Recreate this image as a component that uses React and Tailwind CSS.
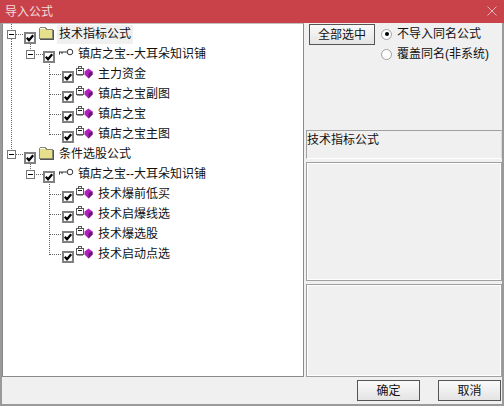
import React from 'react';

const FONT = "font-['Liberation_Sans','Noto_Sans_CJK_SC',sans-serif]";

// Dotted tree connectors + expander box, drawn per row
const Guides = ({ children }) => (
  <svg width="97" height="20" className="absolute left-0 top-0" shapeRendering="crispEdges">
    {children}
  </svg>
);
const VDots = ({ x, y1 = 0, y2 = 20 }) => (
  <line x1={x + 0.5} x2={x + 0.5} y1={y1} y2={y2} stroke="#666" strokeDasharray="1 1" />
);
const HDots = ({ x1, x2, y = 10 }) => (
  <line x1={x1} x2={x2} y1={y + 0.5} y2={y + 0.5} stroke="#666" strokeDasharray="1 1" />
);
const Expander = ({ x, y = 6 }) => (
  <g>
    <rect x={x + 0.5} y={y + 0.5} width="8" height="8" fill="#fff" stroke="#777" />
    <line x1={x + 2} x2={x + 7} y1={y + 4.5} y2={y + 4.5} stroke="#000" />
  </g>
);

const Check = ({ left, top = 7 }) => (
  <svg width="12" height="12" viewBox="0 0 12 12" className="absolute" style={{ left, top }}>
    <rect x="1" y="1" width="10" height="10" fill="#fff" stroke="#808080" strokeWidth="2" />
    <path d="M2.8 5.8 L5 8.3 L9.2 3.2" fill="none" stroke="#000" strokeWidth="2.2" />
  </svg>
);

const Folder = () => (
  <svg width="16" height="14" viewBox="0 0 16 14" className="absolute left-[35px] top-[2px]" shapeRendering="crispEdges">
    <path d="M1.5 3.5 V2.5 H2.5 V1.5 H7.5 V2.5 H8.5 V3.5 H14.5 V12.5 H1.5 Z" fill="#e6e08c" stroke="#8a8a70" />
    <rect x="2" y="2" width="5" height="1" fill="#fff" />
    <rect x="15" y="4" width="1" height="9" fill="#555" />
    <rect x="2" y="13" width="14" height="1" fill="#555" />
  </svg>
);

const KeyIcon = () => (
  <svg width="16" height="8" viewBox="0 0 16 8" className="absolute left-[55px] top-[4px]">
    <circle cx="12" cy="4" r="2.8" fill="#fff" stroke="#333" />
    <path d="M9 4 H1 M1.5 4 V6.5 M4 4 V6" fill="none" stroke="#333" />
  </svg>
);

const FormulaIcon = () => (
  <svg width="17" height="14" viewBox="0 0 17 14" className="absolute left-[73px] top-[1px]" shapeRendering="crispEdges">
    <path d="M2.5 3.5 V1.5 H5.5 V3.5" fill="none" stroke="#555" />
    <rect x="0.5" y="3.5" width="7" height="6" fill="#fff" stroke="#555" />
    <rect x="2" y="5" width="4" height="1" fill="#222" />
    <rect x="1" y="10" width="6" height="1" fill="#999" />
    <path d="M12.5 3.5 L16.5 6.5 V9.5 L12.5 13.5 L8.5 9.5 V6.5 Z" fill="#b020c0" shapeRendering="auto" />
    <path d="M12.5 8 L16.5 6.5 V9.5 L12.5 13.5 Z" fill="#6a1478" shapeRendering="auto" />
  </svg>
);

const GroupRow = ({ label, selected, continues }) => (
  <div className="relative h-5">
    <Guides>
      <VDots x={8} y1={0} y2={6} />
      {continues && <VDots x={8} y1={15} y2={20} />}
      <HDots x1={13} x2={21} />
      <VDots x={27} y1={18} y2={20} />
      <Expander x={4} />
    </Guides>
    <Check left={21} top={8} />
    <Folder />
    <span className={`absolute left-[54px] top-[1px] h-[19px] px-[2px] leading-[18px] text-[12px] text-[#111] ${selected ? 'bg-[#f0f0f0]' : ''}`}>{label}</span>
  </div>
);

const KeyRow = ({ label, outer }) => (
  <div className="relative h-5">
    <Guides>
      {outer && <VDots x={8} />}
      <VDots x={27} y1={0} y2={6} />
      <HDots x1={33} x2={40} />
      <VDots x={46} y1={18} y2={20} />
      <Expander x={23} />
    </Guides>
    <Check left={40} />
    <KeyIcon />
    <span className="absolute left-[75px] top-[1px] leading-[18px] text-[12px] text-[#111]">{label}</span>
  </div>
);

const LeafRow = ({ label, outer, last }) => (
  <div className="relative h-5">
    <Guides>
      {outer && <VDots x={8} />}
      <VDots x={46} y1={0} y2={last ? 11 : 20} />
      <HDots x1={47} x2={59} />
    </Guides>
    <Check left={59} />
    <FormulaIcon />
    <span className="absolute left-[95px] top-[1px] leading-[18px] text-[12px] text-[#111]">{label}</span>
  </div>
);

const Radio = ({ checked, label }) => (
  <div className="flex items-center h-5 gap-[5px]">
    <span className="w-[11px] h-[11px] rounded-full bg-white border border-[#a0a0a0] flex items-center justify-center">
      {checked && <span className="w-[4px] h-[4px] rounded-full bg-black" />}
    </span>
    <span className="text-[12px] text-[#111] leading-[18px]">{label}</span>
  </div>
);

const DlgButton = ({ children, className = '' }) => (
  <button className={`h-[21px] border border-[#555] bg-gradient-to-b from-[#fafafa] to-[#e4e4e4] text-[12px] text-[#111] leading-none ${className}`}>
    {children}
  </button>
);

export default function App() {
  return (
    <div className={`${FONT} w-[504px] h-[406px] flex flex-col bg-[#f0f0f0] overflow-hidden`}>
      <div className="h-[23px] bg-[#c9424a] flex items-center justify-between pl-[5px] pr-[5px] shrink-0">
        <span className="text-[12px] text-[#f3dcdd]">导入公式</span>
        <svg width="10" height="10" viewBox="0 0 10 10" className="mr-[2px] mb-[2px]">
          <path d="M0.5 0.5 L9.5 9.5 M9.5 0.5 L0.5 9.5" stroke="#e8b4b8" fill="none" />
        </svg>
      </div>
      <div className="flex-1 flex flex-col border-x-2 border-b-2 border-[#9a9a9a] min-h-0">
        <div className="flex flex-1 min-h-0">
          <div className="w-[302px] bg-white border border-[#8a8a8a] border-t-[#c0c0c0] shrink-0">
            <GroupRow label="技术指标公式" selected continues />
            <KeyRow label="镇店之宝--大耳朵知识铺" outer />
            <LeafRow label="主力资金" outer />
            <LeafRow label="镇店之宝副图" outer />
            <LeafRow label="镇店之宝" outer />
            <LeafRow label="镇店之宝主图" outer last />
            <GroupRow label="条件选股公式" />
            <KeyRow label="镇店之宝--大耳朵知识铺" />
            <LeafRow label="技术爆前低买" />
            <LeafRow label="技术启爆线选" />
            <LeafRow label="技术爆选股" />
            <LeafRow label="技术启动点选" last />
          </div>
          <div className="flex-1 flex flex-col pl-[2px] min-w-0">
            <div className="h-[107px] flex pl-[3px] pt-[1px] gap-[6px] shrink-0">
              <DlgButton className="w-[66px]">全部选中</DlgButton>
              <div className="flex flex-col">
                <Radio checked label="不导入同名公式" />
                <Radio label="覆盖同名(非系统)" />
              </div>
            </div>
            <div className="h-[29px] border border-[#a0a0a0] border-r-[#d8d8d8] border-b-[#fff] text-[12px] text-[#111] leading-[18px] shrink-0">技术指标公式</div>
            <div className="h-[119px] mt-[3px] border border-[#a0a0a0] shadow-[inset_0_0_0_1px_#fff] shrink-0" />
            <div className="flex-1 mt-[3px] border border-[#a0a0a0] shadow-[inset_0_0_0_1px_#fff]" />
          </div>
        </div>
        <div className="h-[27px] flex items-center justify-end gap-[18px] pr-[1px] shrink-0">
          <DlgButton className="w-[63px]">确定</DlgButton>
          <DlgButton className="w-[63px]">取消</DlgButton>
        </div>
      </div>
    </div>
  );
}
